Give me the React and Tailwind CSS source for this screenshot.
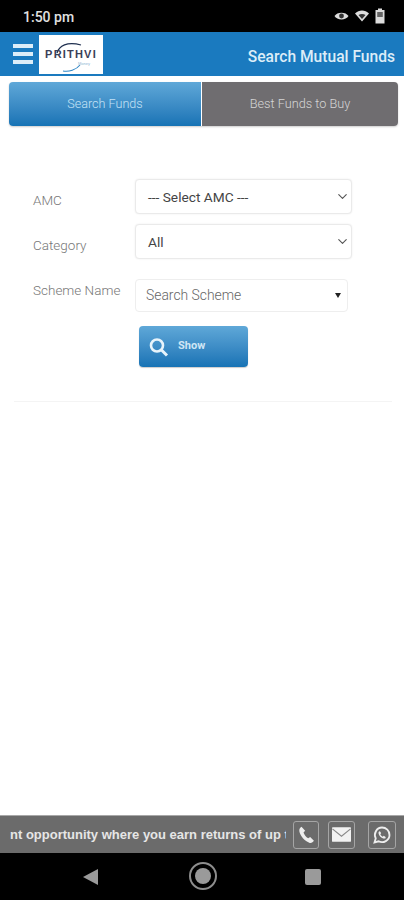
import { ChevronDown } from "lucide-react";

const Logo = () => (
    <div className="relative w-[64px] h-[39px] bg-white flex items-center justify-center">
        <svg className="absolute left-0 top-0" width="64" height="39" viewBox="0 0 64 39" fill="none">
            <path d="M18 18 C20 11 28 6 42 10" stroke="#1f2f4f" strokeWidth="1.3" />
            <path d="M24 36 C30 37 37 35 41 30" stroke="#2f86c5" strokeWidth="1.1" />
        </svg>
        <span className="relative font-['Liberation_Sans',sans-serif] text-[11px] font-bold tracking-[1.2px] text-[#3a4058] leading-none">PRITHVI</span>
        <span className="absolute right-[13px] top-[27px] font-['Liberation_Sans',sans-serif] text-[4px] text-[#8fb6d2] leading-none">Money</span>
    </div>
);

const Field = ({ label, children, className, labelClass }) => (
    <div className={`flex items-start ${className}`}>
        <div className={`w-[135px] pl-[33px] text-[13.5px] font-light leading-[16px] text-[#777777] shrink-0 whitespace-nowrap ${labelClass}`}>{label}</div>
        {children}
    </div>
);

const SelectBox = ({ value }) => (
    <div className="w-[217px] h-[35px] flex items-center justify-between pl-[12px] pr-[1px] bg-white border border-[#eaeaea] rounded-[4px] shadow-[0_0_2px_rgba(0,0,0,0.08)]">
        <span className="text-[13.7px] text-[#444444] pt-[1px]">{value}</span>
        <ChevronDown size={15} strokeWidth={1.8} className="text-[#555555]" />
    </div>
);

const App = () => {
    return (
        <div className="w-[404px] h-[900px] flex flex-col bg-white overflow-hidden font-['Roboto',sans-serif]">
            {/* status bar */}
            <div className="h-[32px] bg-black flex items-center justify-between pl-[23px] pr-[19px] shrink-0">
                <span className="text-[14px] font-medium text-[#e0e0e0] pt-[2px]">1:50 pm</span>
                <div className="flex items-center gap-[6px]">
                    <svg width="15" height="12" viewBox="0 0 15 12">
                        <path d="M0.5 6 C3 1.5 12 1.5 14.5 6 C12 10.5 3 10.5 0.5 6Z" fill="#dddddd" />
                        <circle cx="7.5" cy="6" r="2.4" fill="#333333" />
                    </svg>
                    <svg width="14" height="12" viewBox="0 0 14 12">
                        <path d="M0 3.5 C4 -0.5 10 -0.5 14 3.5 L7 11.5Z" fill="#dddddd" />
                        <path d="M3.5 5 C5.5 3.6 8.5 3.6 10.5 5 L7 9Z" fill="#333333" />
                    </svg>
                    <svg width="10" height="16" viewBox="0 0 10 16">
                        <path d="M3 0.5 H7 V2 H9.5 V15.5 H0.5 V2 H3Z" fill="#dddddd" />
                        <rect x="2.2" y="4" width="5.6" height="5" fill="#666666" />
                    </svg>
                </div>
            </div>

            {/* header */}
            <div className="h-[44px] bg-[#1a7abf] flex items-center shrink-0 pl-[13px] pr-[9px]">
                <div className="flex flex-col gap-[4px] w-[20px]">
                    <div className="h-[4px] bg-[#dcedf8]" />
                    <div className="h-[4px] bg-[#dcedf8]" />
                    <div className="h-[4px] bg-[#dcedf8]" />
                </div>
                <div className="ml-[6px] mt-[1px]"><Logo /></div>
                <div className="ml-auto text-[15.6px] font-medium text-[#dcedf8] pt-[7px]">Search Mutual Funds</div>
            </div>

            {/* tabs */}
            <div className="mt-[6px] ml-[9px] mr-[6px] h-[44px] flex rounded-[4px] overflow-hidden shrink-0 shadow-[0_1px_2px_rgba(0,0,0,0.2)]">
                <div className="w-[192px] flex items-center justify-center bg-gradient-to-b from-[#5fa8d8] to-[#1673b5] text-[12.6px] font-light text-[#c4e2f5]">Search Funds</div>
                <div className="flex-1 ml-[1px] flex items-center justify-center bg-[#6f6d70] text-[12.7px] font-light text-[#d6d6d6]">Best Funds to Buy</div>
            </div>

            {/* form */}
            <div className="flex-1 flex flex-col">
                <Field label="AMC" className="mt-[53px]" labelClass="pt-[13px]">
                    <SelectBox value="--- Select AMC ---" />
                </Field>
                <Field label="Category" className="mt-[10px]" labelClass="pt-[13px]">
                    <SelectBox value="All" />
                </Field>
                <Field label="Scheme Name" className="mt-[20px]" labelClass="pt-[3px]">
                    <div className="w-[213px] h-[33px] flex items-center justify-between pl-[10px] pr-[6px] bg-white border border-[#eeeeee] rounded-[4px]">
                        <span className="text-[13.9px] font-light text-[#666666]">Search Scheme</span>
                        <span className="w-0 h-0 border-l-[3px] border-r-[3px] border-t-[5px] border-l-transparent border-r-transparent border-t-[#222222]" />
                    </div>
                </Field>
                <div className="mt-[14px] ml-[139px] w-[109px] h-[41px] rounded-[4px] flex items-center pl-[10px] bg-gradient-to-b from-[#5fa8d8] to-[#1673b5] shadow-[0_1px_1px_rgba(0,0,0,0.2)]">
                    <svg width="20" height="20" viewBox="0 0 20 20" fill="none" stroke="#e8f4fb">
                        <circle cx="8" cy="8.5" r="6" strokeWidth="2.6" />
                        <path d="M12.5 13 L18 18.5" strokeWidth="3" />
                    </svg>
                    <span className="ml-[9px] -mt-[1px] text-[11px] font-bold text-[#cfe6f5]">Show</span>
                </div>
                <div className="mt-[34px] ml-[14px] mr-[12px] h-px bg-[#f4f4f4]" />
            </div>

            {/* ticker */}
            <div className="h-[38px] bg-[#6b6b6b] border-t border-[#a8a8a8] flex items-center shrink-0 pl-[10px] pr-[8px]">
                <div className="w-[276px] overflow-hidden whitespace-nowrap text-[13px] font-bold text-[#e6e6e6] font-['Liberation_Sans',sans-serif]">nt opportunity where you earn returns of up to</div>
                <div className="ml-[7px] w-[26px] h-[28px] rounded-[3px] border border-[#a5a5a5] flex items-center justify-center">
                    <svg width="20" height="20" viewBox="0 0 24 24" fill="#eeeeee">
                        <path d="M6.6 2 C5 3 3.5 4.6 4 7.5 C5 13 10.5 19.5 16.5 21.5 C18.5 22 20.5 20.5 21.5 19 L17 14.5 L14.6 16 C12 14.5 9.8 11.5 9 9 L11 7 Z" />
                    </svg>
                </div>
                <div className="ml-[9px] w-[27px] h-[28px] rounded-[3px] border border-[#a5a5a5] flex items-center justify-center">
                    <svg width="19" height="15" viewBox="0 0 22 17">
                        <rect x="0" y="0" width="22" height="17" rx="1" fill="#f2f2f2" />
                        <path d="M0.5 2 L11 10.5 L21.5 2" fill="none" stroke="#8a8a8a" strokeWidth="1.4" />
                    </svg>
                </div>
                <div className="ml-[13px] w-[28px] h-[28px] rounded-[3px] border border-[#a5a5a5] flex items-center justify-center">
                    <svg width="20" height="20" viewBox="0 0 24 24" fill="none">
                        <path d="M3 21 L4.5 16 C1.5 10.5 5.5 3 12 3 C17 3 21 7 21 12 C21 18.5 13.5 22.5 8 19.5 Z" stroke="#eeeeee" strokeWidth="2.2" />
                        <path d="M8.5 7.5 C7 9 8 12 10 14 C12 16 15 17 16.5 15.5 L16 14 L14 13 L13 14 C11.8 13.5 10.5 12 10 11 L11 10 L10 8 Z" fill="#eeeeee" />
                    </svg>
                </div>
            </div>

            {/* nav bar */}
            <div className="h-[47px] bg-black flex items-center shrink-0 pl-[83px]">
                <div className="w-0 h-0 border-y-[8px] border-y-transparent border-r-[15px] border-r-[#9a9a9a]" />
                <div className="ml-[91px] w-[28px] h-[28px] rounded-full border-[2px] border-[#8d8d8d] flex items-center justify-center -mt-px">
                    <div className="w-[16px] h-[16px] rounded-full bg-[#9a9a9a]" />
                </div>
                <div className="ml-[88px] w-[16px] h-[16px] rounded-[2px] bg-[#9a9a9a]" />
            </div>
        </div>
    );
};

export default App;
